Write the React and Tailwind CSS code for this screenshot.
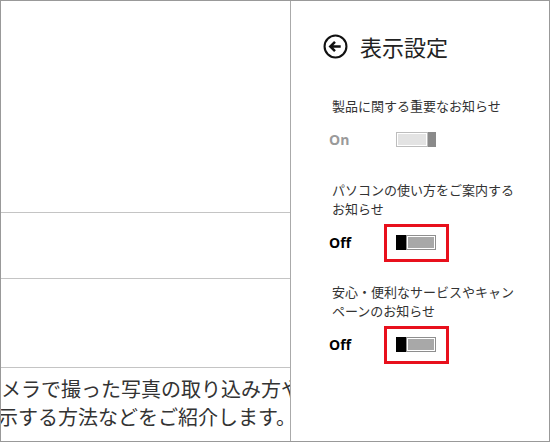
import React from 'react';

const JP = { fontFamily: '"Noto Sans CJK JP", "Noto Sans", sans-serif' };

function Toggle({ on }) {
    if (on) {
        return (
            <div className="flex w-[40px] h-[15px]">
                <div className="flex-1 border border-[#bdbdbd] bg-white p-[1px]">
                    <div className="h-full bg-[#e3e3e3]"></div>
                </div>
                <div className="w-[8px] bg-[#8a8a8a]"></div>
            </div>
        );
    }
    return (
        <div className="flex w-[40px] h-[15px]">
            <div className="w-[10px] bg-black"></div>
            <div className="flex-1 border border-[#8e8e8e] bg-white p-[1px]">
                <div className="h-full bg-[#a8a8a8]"></div>
            </div>
        </div>
    );
}

function Setting({ label, on, marked, top }) {
    return (
        <div className={top}>
            <div className="text-[13px] leading-[19px] text-[#333] w-[190px]" style={JP}>{label}</div>
            <div className="flex items-center -ml-[3px] mt-[14px]">
                <div className={`w-[67px] text-[14px] font-bold font-['Open_Sans',sans-serif] ${on ? 'text-[#9a9a9a]' : 'text-black'}`}>
                    {on ? 'On' : 'Off'}
                </div>
                <div className="relative">
                    <Toggle on={on} />
                    {marked && (
                        <div className="absolute -left-[12px] -top-[11px] w-[65px] h-[38px] border-[3px] border-[#e8101c]"></div>
                    )}
                </div>
            </div>
        </div>
    );
}

export default function App() {
    return (
        <div className="w-[550px] h-[442px] border border-[#999] bg-white flex overflow-hidden">
            {/* left content */}
            <div className="w-[290px] h-full border-r border-[#aaa] flex flex-col overflow-hidden">
                <div className="h-[212px] border-b border-[#c4c4c4]"></div>
                <div className="h-[66px] border-b border-[#c4c4c4]"></div>
                <div className="h-[89px] border-b border-[#c4c4c4]"></div>
                <div className="flex-1 pt-[7px] text-[20px] leading-[28px] text-[#333] whitespace-nowrap" style={JP}>
                    <div>メラで撮った写真の取り込み方や</div>
                    <div className="-ml-[3px]">示する方法などをご紹介します。</div>
                </div>
            </div>

            {/* settings pane */}
            <div className="flex-1 pl-[32px] pt-[32px]">
                <div className="flex items-center gap-[12px]">
                    <svg width="25" height="25" viewBox="0 0 24 24" fill="none" stroke="#111" strokeWidth="2">
                        <circle cx="12" cy="12" r="10.5" />
                        <path d="M17 12H7.5M11.5 7.5L7 12l4.5 4.5" strokeWidth="2.4" />
                    </svg>
                    <div className="text-[22px] leading-[26px] text-[#222]" style={JP}>表示設定</div>
                </div>
                <div className="pl-[9px]">
                    <Setting top="mt-[37px]" label="製品に関する重要なお知らせ" on />
                    <Setting top="mt-[30px]" label="パソコンの使い方をご案内するお知らせ" marked />
                    <Setting top="mt-[29px]" label="安心・便利なサービスやキャンペーンのお知らせ" marked />
                </div>
            </div>
        </div>
    );
}
